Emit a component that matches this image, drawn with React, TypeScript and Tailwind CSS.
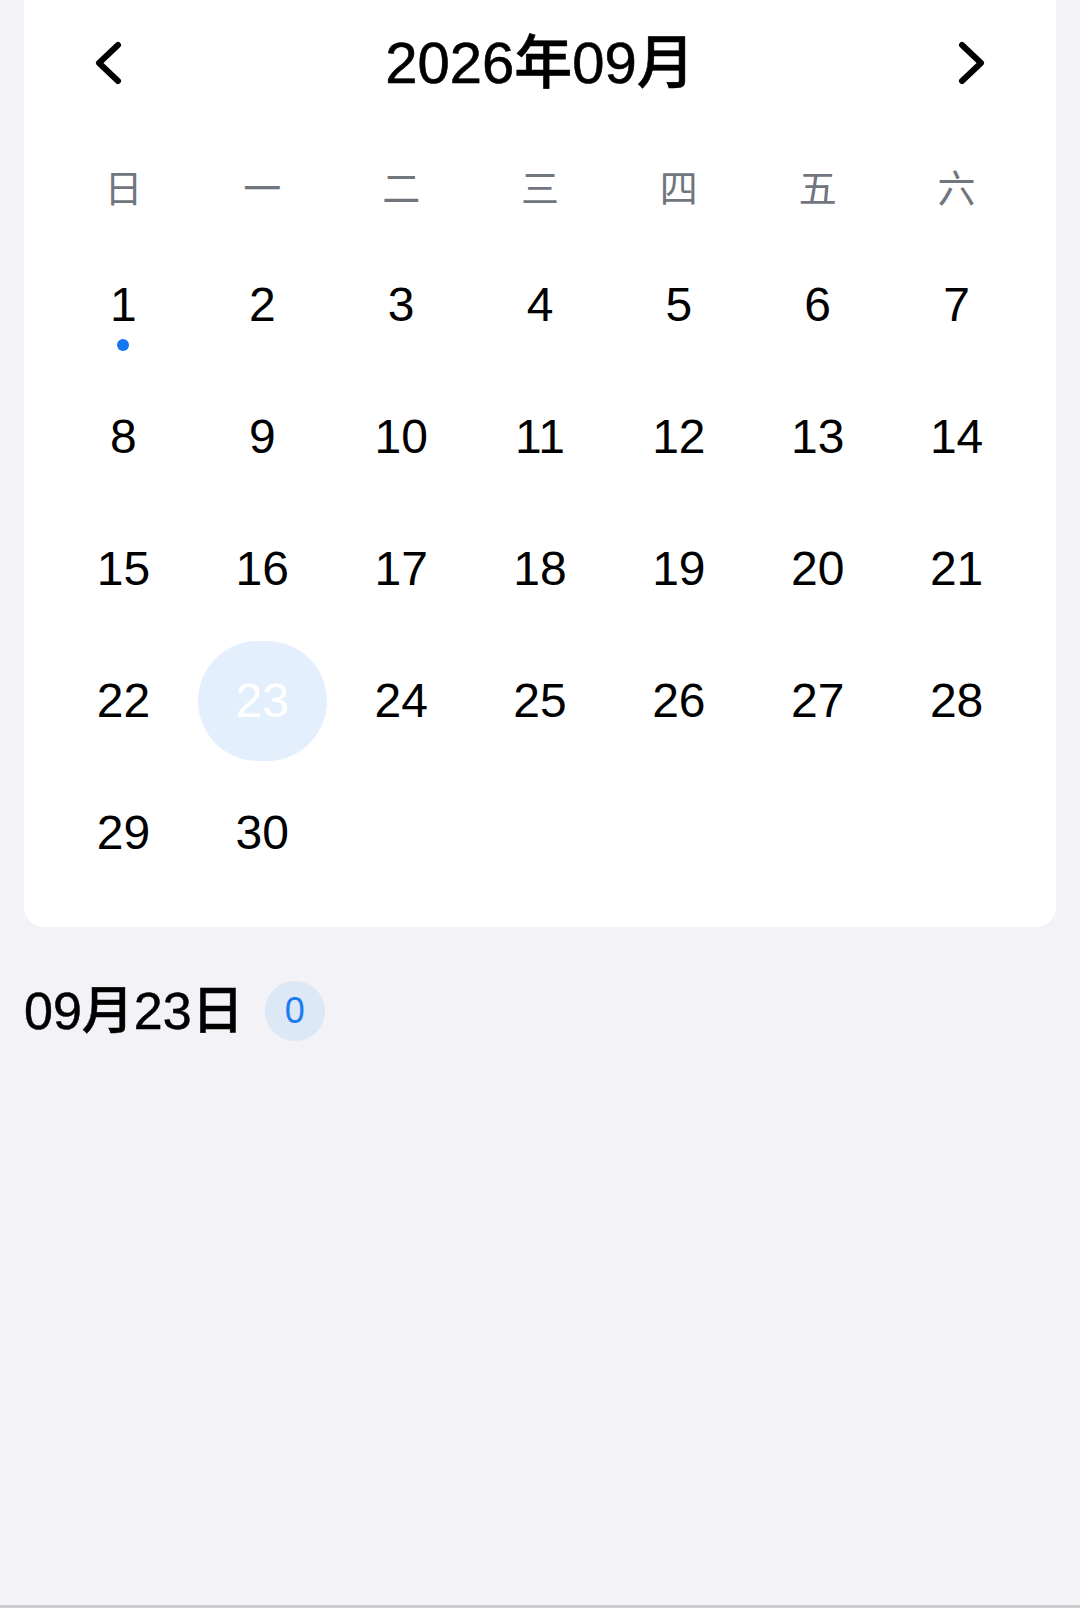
const weekdays = ['日', '一', '二', '三', '四', '五', '六']
const days = Array.from({ length: 30 }, (_, i) => i + 1)
const selected = 23
const marked = [1]

function Chevron({ dir }: { dir: 'left' | 'right' }) {
  return (
    <svg
      width="28"
      height="44"
      viewBox="0 0 28 44"
      fill="none"
      stroke="currentColor"
      strokeWidth="6"
      strokeLinecap="round"
      strokeLinejoin="round"
    >
      {dir === 'left' ? <path d="M24 4 L5 22 L24 40" /> : <path d="M4 4 L23 22 L4 40" />}
    </svg>
  )
}

export default function App() {
  return (
    <div
      className="h-[1613px] flex flex-col bg-[#f2f2f7] text-black"
      style={{ fontFamily: '"Liberation Sans", "Noto Sans CJK SC", sans-serif' }}
    >
      <div className="flex-1">
        <div className="mx-[24px] bg-white rounded-b-[20px] px-[30px] pb-[28px]">
          <div className="h-[126px] flex items-center justify-between px-[40px]">
            <button className="text-black">
              <Chevron dir="left" />
            </button>
            <div className="text-[58px] leading-none font-medium [-webkit-text-stroke:0.6px_black]">2026年09月</div>
            <button className="text-black">
              <Chevron dir="right" />
            </button>
          </div>

          <div className="mt-[13px] h-[100px] grid grid-cols-7 items-center">
            {weekdays.map((w) => (
              <div key={w} className="text-center text-[38px] leading-none text-[#70757e]">
                {w}
              </div>
            ))}
          </div>

          <div className="grid grid-cols-7">
            {days.map((d) => (
              <div key={d} className="h-[132px] px-[5px] py-[6px]">
                <div
                  className={`relative h-full w-full rounded-full flex items-center justify-center text-[48px] leading-none ${
                    d === selected ? 'bg-[#e4effd] text-white' : 'text-black'
                  }`}
                >
                  {d}
                  {marked.includes(d) && (
                    <span className="absolute left-1/2 top-[calc(50%+34px)] w-[12px] h-[12px] -translate-x-1/2 rounded-full bg-[#1677f0]" />
                  )}
                </div>
              </div>
            ))}
          </div>
        </div>

        <div className="mt-[54px] px-[24px] flex items-center gap-[21px] h-[60px]">
          <div className="text-[52px] leading-none font-medium [-webkit-text-stroke:0.5px_black]">09月23日</div>
          <div className="w-[60px] h-[60px] rounded-full bg-[#dde8f7] flex items-center justify-center text-[36px] text-[#1a7cf0] leading-none">
            0
          </div>
        </div>
      </div>
      <div className="h-[8px] border-t-[3px] border-[#cdcdd0] bg-white" />
    </div>
  )
}
